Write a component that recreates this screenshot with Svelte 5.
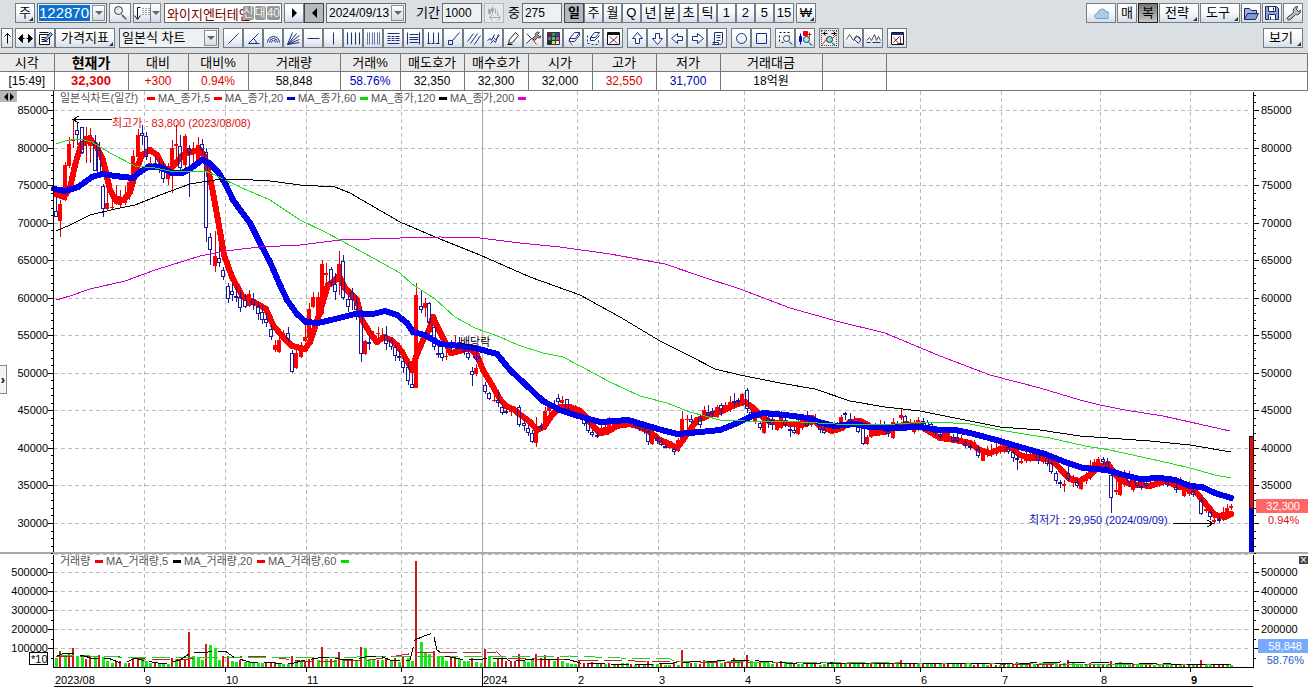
<script lang="ts">
  type Shape = [d: string, stroke: string, fill?: string];

  const navy = '#1c2f7a';
  const dark = '#222';

  const icons: Record<string, Shape[]> = {
    search: [['M9 9l5 5M10 9l4 4M9 10l4 4', '#777'], ['M2 5a4 4 0 1 0 8 0a4 4 0 1 0-8 0z', '#333', '#e4f3fa'], ['M4 5l2-2', '#8bc']],
    sort: [['M6 2H3v11M0 10l3 4l3-4', '#111'], ['M8 3h1M11 3h1M14 3h1M8 5h1M11 5h1M14 5h1M8 7h1M11 7h1M14 7h1M8 9h1M11 9h1M14 9h1', '#444']],
    bars: [['M3 3v6M2 4h2v4H2zM6 1v7M5 3h2v3H5zM9 3v5', '#aaa', '#aaa'], ['M3 12h11M6 9l-3 3l3 3M11 9l3 3l-3 3M11 6v4', '#aaa']],
    cloud: [['M3 13c-3-1-2-5 1-5c1-5 7-6 8-2c4-1 5 6 2 7z', '#6f9cc4', '#a9cbe6']],
    folder: [['M1 14V3h5l2 2h5v3', '#1d2758', '#9fb1e4'], ['M1 14L4 8h11l-3 6z', '#1d2758', '#8298d8']],
    save: [['M1 1h11l2 2v11H1z', '#1d2758', '#8ea4e0'], ['M4 1h7v5H4z', '#1d2758', '#fff'], ['M4 14V9h7v5', '#1d2758', '#fff'], ['M6 11v3M9 2v3', '#1d2758']],
    wrench: [['M2 12L8 7C7 4 9 1 12 1l-1 3l2 2l2-1c0 3-2 5-5 4l-5 5c-2 1-4 0-3-2z', '#333', '#bbb']],
    lr: [['M1 8l4-4v8zM15 8l-4-4v8zM4 8h3M9 8h3', '#000', '#000']],
    up: [['M8 13V3M5 6l3-3l3 3', '#000']],
    note: [['M2 4h10v10H2zM2 2h9', '#111', '#fff'], ['M4 7h4M4 9h3M4 11h6', '#111'], ['M7 9l6-7l2 2l-6 6l-3 1z', '#17255a', '#9fb4e8']],
    line: [['M3 13L13 3', navy]],
    angle: [['M13 3L3 13h11M8 8q3 2 3 5', navy]],
    arcs: [['M2 12a6 6 0 0 1 12 0M4 12a4 4 0 0 1 8 0M6 12a2 2 0 0 1 4 0', navy]],
    fan: [['M2 14L7 2M2 14L11 3M2 14L14 5M2 14L14 9M2 14L14 12', navy]],
    hline: [['M2 8h12', navy]],
    vline: [['M8 2v12', navy]],
    four: [['M2 2v12M6 2v12M10 2v12M14 2v12', navy]],
    six: [['M2 2v12M4 2v12M7 2v12M9 2v12M12 2v12M14 2v12', '#6574a4']],
    fib: [['M2 3h12M2 13h12', navy], ['M2 6h3M6 6h3M10 6h4M2 8h3M6 8h3M10 8h4M2 10h3M6 10h3M10 10h4', navy]],
    trisect: [['M2 2v12M4 4h9M4 7h9M4 9h9M4 12h9M14 2v12', navy]],
    fork: [['M3 2v11M8 2v11M13 2v11M2 13h3M6 13h3M10 13h4', navy]],
    node: [['M3 10h4v4H3zM7 10L14 2', navy]],
    parallel: [['M2 11L8 3M5 13L12 3M9 14L15 5', navy]],
    channel: [['M2 10l3-2l1 2l3-6M5 13l3-3l2 2l3-8M8 7l2 2l4-4', navy]],
    pencil: [['M3 13L4 9L10 2l3 3l-6 7z', dark, '#fff'], ['M2 14h5', '#000']],
    tools: [['M1 3l5 5l5 6', '#e22'], ['M1 13L6 8L2 4', navy], ['M7 8l3-3c-1-3 2-4 4-3l-2 2l2 2l2-1c0 2-2 3-4 2l-3 3z', '#444', '#999']],
    palette: [['M2 2h4v4H2z', '#333', '#822'], ['M6 2h4v4H6z', '#333', '#396'], ['M10 2h4v4h-4z', '#333', '#44a'], ['M2 6h4v4H2z', '#333', '#28b'], ['M6 6h4v4H6z', '#333', '#4c5'], ['M10 6h4v4h-4z', '#333', '#b5b'], ['M2 10h4v4H2z', '#333', '#224'], ['M6 10h4v4H6z', '#333', '#dd4'], ['M10 10h4v4h-4z', '#333', '#eee']],
    eraser: [['M4 8l5-6h5l-4 6zM4 8v3h5l5-6V2', navy, '#fff'], ['M3 10l4 5', '#e33']],
    eraserAll: [['M5 7l4-5h5l-4 5zM5 7v3h4l5-5', navy, '#fff'], ['M2 5v2M2 9v2M2 13h2M6 14h2M10 14h2M13 12v-2', navy]],
    clear: [['M2 2h12v12H2zM2 4h12M2 3h12', '#111', '#fff'], ['M4 6l8 7', '#e22'], ['M12 6l-8 7', navy]],
    aup: [['M8 2L3 8h3v5h4V8h3z', navy, '#fff']],
    adown: [['M8 14L3 8h3V3h4v5h3z', navy, '#fff']],
    aleft: [['M2 8l6-5v3h5v4H8v3z', navy, '#fff']],
    aright: [['M14 8L8 3v3H3v4h5v3z', navy, '#fff']],
    scroll: [['M5 2h8v8c0 3-1 4-3 4H3c2 0 2-1 2-4zM7 5h4M7 7h4M7 10h4M3 12h6v2', navy, '#fff']],
    circle: [['M3 8a5 5 0 1 0 10 0a5 5 0 1 0-10 0z', navy]],
    square: [['M3 3h10v10H3z', navy]],
    zoomBox: [['M2 2h2M6 2h2M10 2h2M2 5v2M2 9v2M12 5v1M4 12h2', '#111'], ['M6 8a3 3 0 1 0 6 0a3 3 0 1 0-6 0z', '#333', '#fff'], ['M11 11l3 3M12 11l3 3', '#38a']],
    zoomCandle: [['M3 3v11', '#00c'], ['M2 6h2v5H2z', '#00c', '#00c'], ['M6 1h4v4H6z', '#e00', '#e00'], ['M12 2v5M10 4h4', '#e00'], ['M6 9a3 3 0 1 0 6 0a3 3 0 1 0-6 0z', '#333', '#aee'], ['M11 12l3 3M12 12l3 3', '#38a']],
    zoomFit: [['M1 3h5M10 3h5M4 1L2 3l2 2M12 1l2 2l-2 2', '#000'], ['M1 14L6 7l3 3l6-6', '#e33'], ['M5 9a3 3 0 1 0 6 0a3 3 0 1 0-6 0z', '#333', '#8dd'], ['M10 12l3 3M11 12l3 3', '#38a']],
    wave1: [['M1 9l3-5l4 6l3-5l4 4', '#555'], ['M9 9a3 3 0 1 1 4 3M9 9l4 4', navy]],
    wave2: [['M1 10l3-3l2 3l3-6l2 6l2-4l2 4', '#555'], ['M1 12h4M7 12h8', navy]],
    report: [['M2 2h12v12H2z', '#111', '#fff'], ['M2 3h12M2 4h12', navy], ['M4 7l5 6M11 6v7', '#e22'], ['M4 12l6-6M8 13h5', navy]],
  };

  const periods = ['일', '주', '월', 'Q', '년', '분', '초', '틱', '1', '2', '5', '15'];

  const toolGroups = [
    ['line', 'angle', 'arcs', 'fan', 'hline', 'vline', 'four', 'six', 'fib', 'trisect', 'fork', 'node', 'parallel', 'channel', 'pencil', 'tools', 'palette', 'eraser', 'eraserAll', 'clear'],
    ['aup', 'adown', 'aleft', 'aright', 'scroll'],
    ['circle', 'square'],
    ['zoomBox', 'zoomCandle'],
    ['zoomFit'],
    ['wave1', 'wave2'],
    ['report'],
  ];

  const quote = [
    { label: '시각', value: '[15:49]', width: 54 },
    { label: '현재가', value: '32,300', width: 74, cls: 'up strong' },
    { label: '대비', value: '+300', width: 60, cls: 'up' },
    { label: '대비%', value: '0.94%', width: 60, cls: 'up' },
    { label: '거래량', value: '58,848', width: 92 },
    { label: '거래%', value: '58.76%', width: 60, cls: 'down' },
    { label: '매도호가', value: '32,350', width: 64 },
    { label: '매수호가', value: '32,300', width: 64 },
    { label: '시가', value: '32,000', width: 64 },
    { label: '고가', value: '32,550', width: 64, cls: 'up' },
    { label: '저가', value: '31,700', width: 64, cls: 'down' },
    { label: '거래대금', value: '18억원', width: 102 },
    { label: '', value: '', width: 64 },
    { label: '', value: '', width: 0 },
  ];

  const months = [
    { x: 144, label: '9' },
    { x: 225, label: '10' },
    { x: 306, label: '11' },
    { x: 401, label: '12' },
    { x: 482, label: '2024' },
    { x: 577, label: '2' },
    { x: 658, label: '3' },
    { x: 744, label: '4' },
    { x: 834, label: '5' },
    { x: 920, label: '6' },
    { x: 1001, label: '7' },
    { x: 1100, label: '8' },
    { x: 1190, label: '9', bold: true },
  ];

  // price scale: 85000 at 110, 30000 at 523
  const priceY = (p: number) => Math.round(110 + ((85000 - p) * 413) / 55000);
  const volumeY = (v: number) => Math.round(667 - (v * 19) / 100000);

  const prices = Array.from({ length: 12 }, (_, i) => 85000 - i * 5000);
  const minorPrices = Array.from({ length: 61 }, (_, i) => 87000 - i * 1000);
  const volumes = [500000, 400000, 300000, 200000, 100000];
  const minorVolumes = Array.from({ length: 12 }, (_, i) => 600000 - i * 50000);

  // one candle per trading day: colour, high, body top, body bottom, low
  const candleData = `
    b197,211,217,217 r200,204,221,237 r162,165,200,201 r137,144,166,168 r119,139,141,148 b122,130,135,145 b127,127,153,154 r127,136,144,163 r128,135,146,163 b135,142,171,171
    b142,150,173,177 b184,186,209,217 r192,203,209,210 r196,207,208,209 r185,197,204,205 r190,197,205,207 r186,195,203,205 r177,182,197,200 r150,156,183,185 r129,135,157,157
    b125,133,136,145 b132,136,157,160 r157,163,165,168 b157,163,165,167 b158,166,170,173 b162,170,179,183 r163,168,179,185 r140,148,173,193 r125,144,146,165 b135,146,168,170
    r134,136,165,170 b145,148,153,197 r142,150,153,170 r137,145,162,165 b139,144,150,155 b148,152,228,242 b233,237,250,265 r231,256,266,272 b247,258,263,267 b267,270,277,280
    b283,286,299,303 b283,291,295,301 b285,296,298,302 b290,297,308,312 b294,300,307,308 r290,294,306,307 b293,299,305,310 b302,306,314,320 b305,312,320,324 b313,319,323,327
    b325,329,337,340 r340,345,350,352 r335,340,352,353 r330,333,340,342 b327,333,339,343 b350,353,372,373 r350,353,368,369 r342,347,357,358 r323,337,341,342 r303,309,338,340
    r292,297,307,308 r292,297,315,316 r260,264,314,315 r263,273,275,287 b267,269,283,287 b273,284,292,300 r251,264,280,295 b255,261,298,300 b295,299,307,312 b288,292,300,310
    b295,302,310,320 b307,310,354,362 r340,341,354,355 b335,342,344,350 r331,337,338,343 r327,333,334,340 r328,335,336,340 b326,335,344,350 b338,340,347,350 b345,347,356,361
    b350,356,358,361 b357,361,368,373 b362,367,381,385 b373,384,388,388 r283,295,388,388 b290,306,310,313 r298,303,308,317 b302,303,323,325 b325,327,347,350 b345,353,355,358
    b347,353,358,361 r350,356,357,360 b340,345,348,352 r335,343,348,352 b337,342,347,348 b342,346,352,355 b348,353,358,360 b367,371,375,386 r364,368,374,376 r360,364,368,370
    b382,385,392,394 b392,393,399,400 r395,400,401,402 b390,400,403,407 b405,407,413,415 b409,411,413,414 r406,410,412,416 r407,408,411,412 b405,407,425,427 b420,423,426,431
    b425,428,433,436 b430,433,442,443 r417,427,443,447 b423,426,428,430 r407,411,428,430 r404,407,411,415 b400,404,408,410 b394,398,402,404 r396,400,403,405 b399,399,410,412
    r404,406,412,414 r405,407,413,415 r407,409,415,417 b415,418,424,426 b418,420,431,433 b430,432,435,437 b432,435,436,438 r425,428,435,436 r422,427,432,433 r417,421,430,432
    r418,424,427,429 r419,424,427,429 r418,424,427,428 r418,422,425,427 r420,423,427,428 b420,423,426,428 b424,426,429,431 b424,425,430,434 b428,431,442,445 r430,432,444,445
    b436,438,441,444 b438,441,445,446 b444,446,447,448 r442,445,448,449 b447,449,452,455 r438,440,451,452 r411,419,442,443 r415,419,420,430 b415,419,422,424 r417,420,421,425
    b415,418,425,428 r406,410,420,421 b405,412,416,417 b408,411,414,418 r405,407,417,418 b403,405,411,416 r402,405,412,413 r396,402,410,412 b393,401,403,407 b398,400,402,405
    r393,394,403,405 b388,390,409,413 b410,412,415,418 r412,414,422,424 b421,423,428,430 r418,420,433,434 b414,418,423,428 b417,420,425,430 r421,423,430,431 r411,418,428,429
    b418,421,425,427 b425,429,431,437 b427,430,433,434 r419,422,434,435 r417,420,428,430 b411,420,426,427 r415,418,425,427 r414,418,422,424 b422,425,430,433 b425,429,433,434
    r422,425,432,433 r424,427,431,433 r422,425,432,433 r415,417,428,429 b412,413,414,420 b413,419,422,424 r416,419,423,425 b419,422,432,433 b423,425,444,445 r435,437,444,445
    r425,428,437,438 r423,427,433,435 r420,425,430,432 b421,425,430,432 b428,431,434,437 r418,422,438,439 b421,424,428,430 r409,415,418,420 b415,416,425,427 r419,423,427,429
    r420,423,432,434 r417,420,430,431 b418,421,424,426 b420,422,426,429 b422,424,428,431 b427,430,433,436 b430,434,437,439 r429,432,440,441 r429,432,437,439 b434,437,441,443
    b434,437,441,443 r435,438,442,444 b440,443,446,448 b443,446,448,450 r440,442,447,449 b446,449,456,458 r452,454,461,461 r446,450,455,457 r444,450,455,457 r443,448,454,456
    r440,447,452,454 r441,445,452,453 b443,447,452,454 b450,452,458,462 b455,458,460,470 r458,461,463,464 r451,455,461,463 r450,454,460,462 r450,454,459,461 b450,452,461,464
    r454,457,462,464 b456,458,464,466 b461,463,472,474 b471,473,481,484 b480,482,483,488 r480,484,486,492 b465,473,479,481 r475,480,483,487 b479,482,486,488 r476,478,489,490
    r472,475,481,484 r460,465,477,480 r459,462,472,474 r457,459,467,468 b457,459,462,465 b458,462,470,472 b473,475,498,513 r470,490,492,495 r473,475,495,496 r470,476,482,487
    b471,475,482,487 r477,480,490,492 b475,478,486,488 b483,486,488,490 b480,483,486,488 r479,483,486,488 r477,482,486,487 r476,480,485,487 r475,478,484,486 b477,481,485,487
    r477,481,486,487 b484,487,490,493 r477,481,486,489 r483,487,496,497 r481,485,494,496 b488,491,495,497 r488,491,496,498 b497,500,514,515 r505,509,511,513 b509,512,517,520
    r517,520,522,524 b515,519,521,523 r507,512,518,521 r504,508,516,519 r504,506,508,510`;

  const candleX = (i: number) => Math.round(56 + i * 4.29);

  const candles = candleData.trim().split(/\s+/).map((item, i) => {
    const [high, top, bottom, low] = item.slice(1).split(',').map(Number);
    return { x: candleX(i), up: item[0] === 'r', high, top, bottom, low };
  });

  const volumeData = `
    g9 r16 g11 r14 r19 g11 g10 r8 r11 g10 r12 g10 g6 g4 r5 r6 g4 r4 r10 r10 g8 g6 g4 r4 g3 g3 g3 r9 g8 r7 r8 r35 g11 g10 g7 r23 g22 g19 g7 r11
    r11 g6 g5 r7 g5 g5 g4 g4 g4 r4 r5 r5 g3 g3 g3 r11 g6 g6 r6 r8 r8 g7 r20 g8 r8 g7 r15 g7 r7 r7 g6 r20 g19 g8 g7 r7 g7 r9 g7 r9
    g5 r10 g9 g6 r106 g25 g14 g13 r16 g11 g11 g6 r10 r10 g8 g6 g6 r9 g5 g4 r18 g10 g5 r8 r8 r6 r6 r6 r13 g6 g5 g7 r13 r9 r12 r7 g6 r10 g6 g4
    g3 g3 r7 r4 r4 r5 g3 r4 g3 r4 g3 r3 g4 g4 r3 g2 r3 g3 r6 g3 g3 r3 g2 g2 r4 g2 r17 g5 r4 g4 r3 r7 g4 g5 r4 g4 r4 r5 r9 g5
    r7 r12 g6 g5 r4 g5 g4 g3 r4 r6 g4 g5 r4 g3 g3 r3 g4 r5 g2 g3 r4 g3 g3 r3 g4 r3 g3 g4 r3 g3 r4 g3 r4 r3 g4 r3 g3 r7 g4 r3
    r4 g3 r3 g3 g4 r3 g3 r3 r3 g3 g4 r3 g3 g3 r2 r3 g3 g2 r3 r2 g2 r3 g3 r2 r5 g3 g2 r3 g3 r2 g3 r3 r5 g3 r3 g4 r7 g4 g3 g3
    g3 r4 r3 g2 r3 g3 r6 g4 g5 g4 g3 r3 g2 g2 r2 r3 g2 g2 r2 g2 g2 r2 g2 r3 r2 g2 r3 r7 g3 g2 r3 r2 r2 g2 g2`;

  const bars = volumeData.trim().split(/\s+/).map((item, i) => ({
    x: candleX(i) - 1,
    up: item[0] === 'r',
    h: Number(item.slice(1)),
  }));

  const ma5 = '56,194 64,197 70,188 75,165 81,145 90,139 97,147 103,160 110,190 115,199 124,200 130,192 137,168 142,155 150,150 157,155 164,168 170,170 176,163 183,155 190,152 200,150 205,157 212,187 218,220 224,255 232,277 243,297 254,302 266,309 273,325 283,337 292,346 305,349 310,342 318,318 328,285 334,281 339,276 345,288 357,300 362,320 370,333 377,342 384,337 391,340 397,345 402,352 412,370 416,357 423,340 429,330 433,317 439,330 446,344 451,353 460,351 470,348 477,355 483,370 492,385 500,399 506,406 513,409 522,416 530,422 537,430 544,427 552,415 560,407 570,407 580,411 587,418 593,426 600,433 607,432 617,426 630,424 640,427 650,432 660,440 670,444 677,448 683,440 690,430 697,420 710,415 722,411 735,405 745,402 752,407 760,415 770,422 780,423 795,424 805,424 812,418 820,426 832,431 842,428 850,422 860,421 868,425 875,433 885,432 895,428 905,424 920,426 930,432 940,438 955,440 970,443 980,450 990,453 1000,449 1010,447 1020,455 1030,458 1045,458 1055,463 1062,471 1070,479 1080,481 1090,475 1098,467 1108,464 1114,473 1120,480 1130,484 1150,486 1165,481 1180,487 1195,491 1205,503 1215,515 1225,517 1231,514';
  const ma20 = '54,189 65,191 78,187 92,177 102,174 115,176 133,178 140,172 148,167 160,167 172,173 182,173 190,169 202,160 209,163 218,172 225,183 233,200 241,211 250,223 260,243 270,262 280,285 287,300 297,314 306,322 318,323 335,319 355,314 373,314 385,311 397,315 407,323 413,332 425,335 440,344 460,346 475,348 497,354 510,370 525,384 543,401 560,410 575,415 600,422 628,420 645,425 665,431 678,434 700,432 720,430 735,424 750,417 763,413 785,415 808,418 822,423 835,426 855,424 870,427 895,428 920,427 940,430 955,430 970,433 985,437 1000,441 1020,447 1045,454 1065,462 1083,468 1107,470 1120,474 1140,479 1160,478 1175,480 1190,486 1202,487 1215,493 1231,498';
  const ma60 = '56,144 65,141 80,139 92,142 110,153 135,166 155,168 175,172 205,171 215,175 240,187 270,200 300,220 325,232 340,240 375,259 400,273 412,284 435,299 455,317 475,328 500,337 518,345 543,353 563,357 580,366 610,382 640,396 667,403 690,412 720,420 745,421 800,422 835,424 880,425 910,423 935,422 970,424 1000,430 1030,435 1050,438 1085,446 1110,450 1160,461 1190,468 1215,475 1231,478';
  const ma120 = '56,231 70,225 90,215 115,209 135,205 160,195 190,184 215,180 235,179 270,181 300,185 335,187 350,193 400,222 440,239 480,255 530,277 580,295 620,317 660,341 690,356 715,369 740,375 780,383 815,389 850,401 885,407 920,411 960,419 1000,427 1040,430 1080,436 1150,441 1190,445 1231,452';
  const ma200 = '56,300 70,296 90,289 125,281 155,270 200,256 225,251 260,247 300,245 340,240 400,238 440,237 480,238 520,243 560,247 610,254 665,264 700,276 740,289 790,308 840,322 885,333 940,356 990,375 1040,388 1080,400 1100,405 1125,410 1163,416 1190,422 1230,431';

  const vol5 = '57,656 65,653 72,653 80,655 95,659 108,658 118,662 127,662 135,658 145,661 165,664 180,660 192,652 208,652 225,651 235,658 250,662 275,663 290,664 305,660 325,657 340,659 355,659 370,656 380,656 390,660 410,660 415,640 424,636 433,633 437,650 445,656 460,659 483,659 505,658 510,661 540,659 570,660 580,663 640,665 690,662 745,660 800,664 830,663 1000,664 1060,662 1110,663 1231,665';
  const vol20 = '56,656 90,656 120,657 145,659 180,660 210,657 240,657 265,656 300,661 335,661 370,660 415,653 497,652 503,658 570,660 700,662 830,663 1000,664 1231,665';
  const vol60 = '56,655 90,656 145,658 220,657 300,658 415,656 500,657 570,656 620,658 670,659 674,661 750,662 900,663 1231,665';

  const priceLegend = [
    { x: 60, label: '일본식차트(일간)', color: '#e00', mark: 147 },
    { x: 158, label: 'MA_종가,5', color: '#e00', mark: 214 },
    { x: 225, label: 'MA_종가,20', color: '#00c', mark: 287 },
    { x: 298, label: 'MA_종가,60', color: '#0d0', mark: 360 },
    { x: 371, label: 'MA_종가,120', color: '#000', mark: 439 },
    { x: 450, label: 'MA_종가,200', color: '#d0d', mark: 518 },
  ];
  const volumeLegend = [
    { x: 60, label: '거래량', color: '#e00', mark: 95 },
    { x: 106, label: 'MA_거래량,5', color: '#000', mark: 173 },
    { x: 184, label: 'MA_거래량,20', color: '#e00', mark: 257 },
    { x: 268, label: 'MA_거래량,60', color: '#0d0', mark: 341 },
  ];

  let period = $state('일');
  let code = $state('122870');
  let name = $state('와이지엔터테인');
  let count = $state('1000');
  let shown = $state('275');
</script>

{#snippet icon(id: string)}
  <svg class="icon" viewBox="-0.5 -0.5 16 16" aria-hidden="true">
    {#each icons[id] as [d, stroke, fill]}
      <path {d} {stroke} fill={fill ?? 'none'} />
    {/each}
  </svg>
{/snippet}

{#snippet legend(items: typeof priceLegend, y: number)}
  {#each items as item}
    <text class="legend" x={item.x} {y}>{item.label}</text>
    <rect x={item.mark} y={y - 5} width="8" height="3" rx="1" fill={item.color} />
  {/each}
{/snippet}

<header>
  <div class="bar">
    <button class="btn corner first">주</button>
    <div class="combo code">
      <input aria-label="종목코드" bind:value={code} />
      <button class="arrow" aria-label="종목 목록"></button>
    </div>
    <button class="btn mid" aria-label="종목 찾기">{@render icon('search')}</button>
    <div class="split">
      <button class="btn" aria-label="정렬">{@render icon('sort')}</button>
      <button class="arrow" aria-label="정렬 목록"></button>
    </div>
    <div class="combo name">
      <input aria-label="종목명" bind:value={name} />
      <span class="tags"><b>신</b><b>대</b><b>40</b></span>
    </div>
    <div class="group">
      <button class="btn" aria-label="다음"><span class="tri next"></span></button>
      <button class="btn pressed" aria-label="이전"><span class="tri prev"></span></button>
    </div>
    <div class="combo date">
      <select aria-label="기준일"><option>2024/09/13</option></select>
      <span class="arrow"></span>
    </div>
    <label class="field span">기간 <input bind:value={count} /></label>
    <button class="btn off" aria-label="봉 간격" disabled>{@render icon('bars')}</button>
    <label class="field">중 <input bind:value={shown} /></label>
    <div class="group periods">
      {#each periods as p}
        <button class="btn" class:pressed={p === period} onclick={() => (period = p)}>{p}</button>
      {/each}
    </div>
    <button class="btn corner">₩</button>
    <div class="rest">
      <button class="btn cloud" aria-label="클라우드">{@render icon('cloud')}</button>
      <button class="btn">매</button>
      <button class="btn dark">복</button>
      <button class="btn wide corner">전략</button>
      <button class="btn wide corner">도구</button>
      <button class="btn" aria-label="열기">{@render icon('folder')}</button>
      <button class="btn" aria-label="저장">{@render icon('save')}</button>
      <button class="btn" aria-label="설정">{@render icon('wrench')}</button>
    </div>
  </div>

  <div class="bar tools">
    <button class="btn thin" aria-label="접기">{@render icon('up')}</button>
    <div class="group">
      <button class="btn" aria-label="좌우 이동">{@render icon('lr')}</button>
      <button class="btn" aria-label="메모">{@render icon('note')}</button>
      <button class="btn indicator corner">가격지표</button>
    </div>
    <div class="combo kind">
      <select aria-label="차트 종류"><option>일본식 차트</option></select>
      <span class="arrow"></span>
    </div>
    {#each toolGroups as tools}
      <div class="group">
        {#each tools as tool}
          <button class="btn" class:active={tool === 'zoomFit'} aria-label={tool}>{@render icon(tool)}</button>
        {/each}
      </div>
    {/each}
    <div class="rest">
      <button class="btn wide corner">보기</button>
    </div>
  </div>
</header>

<table>
  <colgroup>
    {#each quote as q}
      <col style:width={q.width ? `${q.width}px` : 'auto'} />
    {/each}
  </colgroup>
  <thead>
    <tr>
      {#each quote as q}
        <th class:strong={q.cls?.includes('strong')}>{q.label}</th>
      {/each}
    </tr>
  </thead>
  <tbody>
    <tr>
      {#each quote as q}
        <td class={q.cls}>{q.value}</td>
      {/each}
    </tr>
  </tbody>
</table>

<main>
  <svg class="chart" viewBox="0 91 1308 596">
    <!-- grid -->
    <g class="grid">
      {#each prices as p}
        <path d="M54 {priceY(p) + 0.5}H1250" />
      {/each}
      {#each volumes as v}
        <path d="M54 {volumeY(v) + 0.5}H1250" />
      {/each}
      <path d="M54 554.5H1250" />
      {#each months as m}
        <path class:year={m.label === '2024'} d="M{m.x + 0.5} 91V667" />
      {/each}
    </g>

    <!-- price pane -->
    <polyline class="ma thick" points={ma5} stroke="#f00" />
    <g>
      {#each candles as c}
        {#if c.up}
          <path d="M{c.x + 0.5} {c.high}V{c.low}" stroke="#d00" />
          <rect x={c.x - 2} y={c.top} width="4" height={Math.max(1, c.bottom - c.top)} fill="#f00" />
        {:else}
          <path d="M{c.x + 0.5} {c.high}V{c.top}M{c.x + 0.5} {c.bottom}V{c.low}" stroke="#1a1a9c" />
          <rect x={c.x - 1.5} y={c.top + 0.5} width="3" height={Math.max(1, c.bottom - c.top - 1)} fill="none" stroke="#1a1a9c" />
        {/if}
      {/each}
    </g>
    <polyline class="ma thick" points={ma20} stroke="#00e" />
    <polyline class="ma" points={ma60} stroke="#2d2" />
    <polyline class="ma" points={ma120} stroke="#000" />
    <polyline class="ma" points={ma200} stroke="#c0c" />

    <path class="note" d="M112 119.5H73M79 116L73 119.5L79 123" />
    <text class="high" x="112" y="127">최고가 : 83,800 (2023/08/08)</text>
    <path class="note" d="M1173 523.5H1213M1207 520L1213 523.5L1207 527" />
    <text class="low" x="1029" y="524">최저가 : 29,950 (2024/09/09)</text>
    <text x="460" y="346">배당락</text>
    <path d="M476.5 350V361M473 356L476.5 361L480 356" stroke="#00e" fill="none" />
    {@render legend(priceLegend, 102)}

    <!-- volume pane -->
    {#each bars as b}
      <rect x={b.x} y={667 - b.h} width={b.up ? 2 : 3} height={b.h} fill={b.up ? '#d01818' : '#1ce61c'} />
    {/each}
    <polyline class="ma dash" points={vol20} stroke="#b22" />
    <polyline class="ma dash" points={vol60} stroke="#2c2" />
    <polyline class="ma dash" points={vol5} stroke="#000" />
    {@render legend(volumeLegend, 565)}
    <rect x="0" y="552" width="1308" height="2" fill="#aaa" />

    <!-- axes -->
    <g class="axis">
      <path d="M53.5 91V552M53.5 555V667.5H1253V555M1253.5 92V552M54 686.5H1253M482.5 667V686" />
      {#each minorPrices as p}
        <path d="M51 {priceY(p) + 0.5}H53M1254 {priceY(p) + 0.5}H1256" />
      {/each}
      {#each prices as p}
        <path d="M48 {priceY(p) + 0.5}H53M1254 {priceY(p) + 0.5}H1259" />
      {/each}
      {#each minorVolumes as v}
        <path d="M51 {volumeY(v) + 0.5}H53M1254 {volumeY(v) + 0.5}H1256" />
      {/each}
      {#each volumes as v}
        <path d="M48 {volumeY(v) + 0.5}H53M1254 {volumeY(v) + 0.5}H1259" />
      {/each}
      {#each months as m}
        <path d="M{m.x + 0.5} 667V672" />
      {/each}
    </g>
    <!-- the last-value tags take the place of the lowest labels on the right -->
    {#each prices as p}
      <text class="end" x="48" y={priceY(p) + 4}>{p}</text>
      {#if p > 30000}
        <text x="1261" y={priceY(p) + 4}>{p}</text>
      {/if}
    {/each}
    {#each volumes as v}
      <text class="end" x="48" y={volumeY(v) + 4}>{v}</text>
      {#if v > 100000}
        <text x="1261" y={volumeY(v) + 4}>{v}</text>
      {/if}
    {/each}
    <text x="55" y="684">2023/08</text>
    {#each months as m}
      <text class:bold={m.bold} x={m.x + 1} y="684">{m.label}</text>
    {/each}
    <rect x="29.5" y="652.5" width="18" height="12" fill="#fff" stroke="#000" />
    <text x="31" y="663">*10</text>

    <!-- range and last value -->
    <rect x="1249" y="436" width="4" height="72" fill="#d11" stroke="#300" />
    <rect x="1249" y="508" width="4" height="44" fill="#00d" />
    <rect x="1256" y="499" width="52" height="14" fill="#f66" />
    <text class="white end" x="1300" y="510">32,300</text>
    <text class="high" x="1268" y="524">0.94%</text>
    <rect x="1258" y="639" width="50" height="14" fill="#7af" />
    <text class="white end" x="1302" y="650">58,848</text>
    <text class="rate end" x="1304" y="664">58.76%</text>
  </svg>

  <button class="pan" aria-label="좌우 이동"><span class="tri prev"></span><span class="tri next"></span></button>
  <button class="expand" aria-label="펼치기">›</button>
  <button class="close" aria-label="닫기">×</button>
</main>

<style>
  :global(body) {
    background: #fff;
    color: #000;
    font: 13px/16px 'Liberation Sans', 'Noto Sans CJK KR', sans-serif;
  }

  button,
  input,
  select {
    box-sizing: border-box;
    margin: 0;
    border-radius: 0;
    color: inherit;
    font: inherit;
  }

  header {
    display: flex;
    flex-direction: column;
    gap: 5px;
    box-sizing: border-box;
    height: 53px;
    padding: 3px 5px 5px 0;
    background: #dadfe3;
    white-space: nowrap;
  }

  .bar {
    display: flex;
    align-items: center;
    gap: 2px;
    height: 20px;
  }

  .tools {
    gap: 4px;
    padding-left: 1px;
  }

  .group,
  .split {
    display: flex;
  }

  .btn {
    position: relative;
    display: flex;
    flex: none;
    align-items: center;
    justify-content: center;
    width: 20px;
    height: 20px;
    padding: 0;
    border: 1px solid #777c84;
    background: linear-gradient(#fff, #f6f9fc 50%, #d3dde8);
  }

  .first {
    margin-left: 15px;
  }

  .mid {
    width: 22px;
  }

  .thin {
    width: 12px;
    margin-right: -2px;
  }

  .wide {
    width: 40px;
    padding-right: 4px;
  }

  .indicator {
    width: 60px;
  }

  .cloud {
    width: 30px;
  }

  .corner::after {
    content: '';
    position: absolute;
    right: 1px;
    bottom: 1px;
    border: 2px solid #333;
    border-top-color: transparent;
    border-left-color: transparent;
  }

  .pressed {
    background: #b4b8c0;
    border-color: #444;
  }

  .dark {
    border-color: #222;
    background: linear-gradient(#777, #c4c4c4);
  }

  .active {
    outline: 1px dotted #555;
    outline-offset: -3px;
    background: #e8eaec;
  }

  .off {
    border-color: #b4b8bc;
    background: #e6e8ea;
  }

  .icon {
    flex: none;
    width: 16px;
    height: 16px;
  }

  .tri {
    border: 5px solid transparent;
  }

  .tri.next {
    border-right: 0;
    border-left-color: #000;
  }

  .tri.prev {
    border-left: 0;
    border-right-color: #000;
  }

  .combo {
    position: relative;
    display: flex;
    align-items: center;
    box-sizing: border-box;
    height: 20px;
    border: 1px solid #666b72;
    background: #eef1f4;
  }

  .combo input,
  .combo select {
    flex: 1;
    min-width: 0;
    height: 18px;
    padding: 0 0 0 2px;
    border: 0;
    background: none;
    appearance: none;
  }

  .arrow {
    display: flex;
    flex: none;
    align-items: center;
    justify-content: center;
    box-sizing: border-box;
    width: 13px;
    height: 16px;
    margin-right: 1px;
    padding: 0;
    border: 1px solid #8a8f96;
    background: linear-gradient(#fff, #d3dde8);
    pointer-events: none;
  }

  .arrow::after {
    content: '';
    border: 4px solid transparent;
    border-top-color: #666;
    border-bottom: 0;
  }

  .split .btn {
    width: 18px;
  }

  .split .arrow {
    width: 10px;
    height: 20px;
    margin: 0;
    border-left: 0;
  }

  .combo.code {
    width: 70px;
  }

  .code input {
    flex: none;
    width: 51px;
    height: 16px;
    margin: 0 auto 0 1px;
    padding: 0;
    background: #0a6fd0;
    color: #fff;
    font-size: 15px;
  }

  .name {
    width: 118px;
    margin-left: 1px;
    background: #fff;
  }

  .name input {
    color: #700;
  }

  .tags {
    position: absolute;
    right: 1px;
    display: flex;
    gap: 1px;
  }

  .tags b {
    border-radius: 2px;
    background: #969696;
    color: #eee;
    font-weight: 400;
    font-size: 12px;
    line-height: 14px;
  }

  .date {
    width: 80px;
    font-size: 12px;
  }

  .kind {
    width: 100px;
  }

  .field {
    display: flex;
    align-items: center;
    gap: 2px;
    margin-left: 2px;
  }

  .span {
    margin-left: 8px;
  }

  .field input {
    width: 40px;
    height: 20px;
    padding: 0 2px;
    border: 1px solid #666b72;
    background: #eef1f4;
    font-size: 12px;
  }

  .periods .btn {
    width: 19px;
  }

  .periods .btn:first-child,
  .periods .btn:last-child {
    width: 20px;
  }

  .periods .pressed {
    font-weight: 700;
  }

  .rest {
    display: flex;
    gap: 1px;
    margin-left: auto;
  }

  table {
    width: 100%;
    height: 38px;
    border-collapse: collapse;
    table-layout: fixed;
    font-size: 12px;
    line-height: 16px;
    text-align: center;
  }

  th,
  td {
    height: 18px;
    padding: 0;
    border: 1px solid #777;
    border-left: 0;
    box-sizing: border-box;
    white-space: nowrap;
  }

  th {
    background: #eaeaea;
    font-weight: 400;
    font-size: 13px;
  }

  .up {
    color: #d00;
  }

  .down {
    color: #00b;
  }

  .strong {
    font-weight: 700;
    font-size: 13px;
  }

  th.strong {
    font-size: 14px;
  }

  main {
    position: relative;
  }

  .chart {
    display: block;
    width: 100%;
    font-size: 11px;
    shape-rendering: crispEdges;
  }

  .grid path {
    stroke: #bcbcbc;
    stroke-dasharray: 4 3;
  }

  .grid .year {
    stroke: #aaa;
    stroke-dasharray: none;
  }

  .ma {
    fill: none;
    stroke-width: 1;
  }

  .thick {
    stroke-width: 6;
    stroke-linejoin: round;
    stroke-linecap: round;
  }

  .dash {
    stroke-dasharray: 18 6;
  }

  .axis path,
  .note {
    fill: none;
    stroke: #000;
  }

  .legend {
    fill: #555;
  }

  .high {
    fill: #d11;
  }

  .low {
    fill: #11b;
  }

  .white {
    fill: #fff;
  }

  .rate {
    fill: #2858c8;
  }

  .end {
    text-anchor: end;
  }

  .bold {
    font-weight: 700;
  }

  .pan,
  .expand,
  .close {
    position: absolute;
    display: flex;
    align-items: center;
    justify-content: center;
    padding: 0;
    border: 0;
  }

  .pan {
    top: 0;
    left: 0;
    gap: 2px;
    width: 17px;
    height: 11px;
    background: #b8b8b8;
  }

  .pan .tri {
    border-width: 4px;
  }

  .pan .prev {
    border-left: 0;
  }

  .pan .next {
    border-right: 0;
  }

  .expand {
    top: 46%;
    left: 0;
    width: 7px;
    height: 29px;
    border: 1px solid #888;
    border-left: 0;
    background: #f2f4f6;
    font-weight: 700;
  }

  .close {
    top: 78%;
    right: 0;
    width: 9px;
    height: 8px;
    background: #444;
    color: #fff;
    font-size: 12px;
    line-height: 8px;
  }
</style>
